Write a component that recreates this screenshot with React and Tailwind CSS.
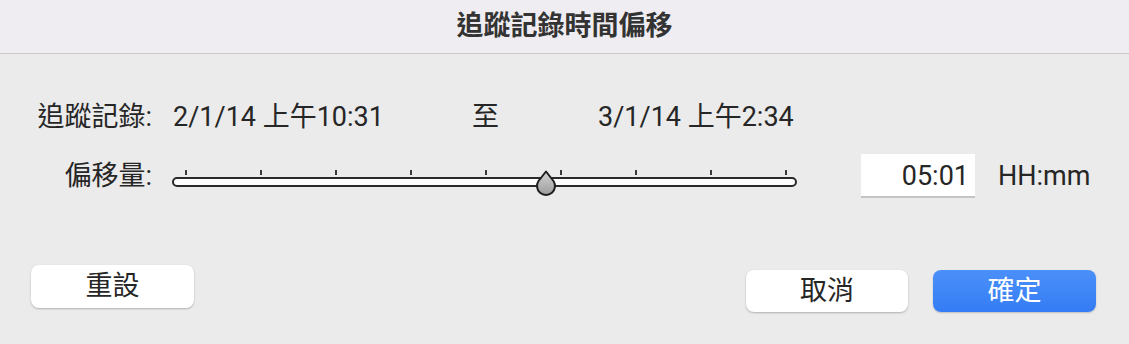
import React from 'react';

const font = { fontFamily: '"Roboto", "Noto Sans CJK TC", sans-serif' };

const ticks = [0, 1, 2, 3, 4, 5, 6, 7, 8];

function OffsetSlider() {
  return (
    <div className="relative w-[625px] h-[44px]">
      {/* tick marks */}
      <div className="absolute top-[16px] left-[13px] flex gap-[73px]">
        {ticks.map((t) => (
          <div key={t} className="w-[2px] h-[5px] bg-[#3a3a3a]" />
        ))}
      </div>
      {/* track */}
      <div className="absolute top-[23px] left-0 w-full h-[10px] rounded-full border-2 border-[#2a2a2a] bg-white" />
      {/* thumb */}
      <svg className="absolute top-[16px] left-[362px]" width="24" height="26" viewBox="0 0 24 26">
        <defs>
          <linearGradient id="thumbFill" x1="0" y1="0" x2="0" y2="1">
            <stop offset="0" stopColor="#d2d2d2" />
            <stop offset="1" stopColor="#9c9c9c" />
          </linearGradient>
        </defs>
        <path
          d="M12 1.5 L19.5 11 A9 9 0 1 1 4.5 11 Z"
          fill="url(#thumbFill)"
          stroke="#1e1e1e"
          strokeWidth="2"
          strokeLinejoin="round"
        />
      </svg>
    </div>
  );
}

export default function App() {
  return (
    <div className="w-[1129px] h-[344px] bg-[#ebebeb] text-[#262626] overflow-hidden" style={font}>
      <div className="h-[54px] bg-[#efedf2] border-b border-[#c9c9cb] flex items-center justify-center">
        <h1 className="text-[27px] font-bold text-[#333] leading-none">追蹤記錄時間偏移</h1>
      </div>

      <div className="pt-[46px]">
        <div className="flex items-center h-[34px] text-[27px]">
          <div className="w-[152px] text-right whitespace-nowrap">追蹤記錄:</div>
          <div className="w-[21px]" />
          <div className="w-[299px] whitespace-nowrap">2/1/14 上午10:31</div>
          <div className="w-[126px]">至</div>
          <div className="whitespace-nowrap">3/1/14 上午2:34</div>
        </div>

        <div className="flex items-center h-[44px] mt-[20px] text-[27px]">
          <div className="w-[152px] text-right whitespace-nowrap">偏移量:</div>
          <div className="w-[20px]" />
          <OffsetSlider />
          <div className="w-[64px]" />
          <div className="w-[114px] h-[44px] bg-white border-b-2 border-[#c4c4c4] flex items-center justify-end pr-[6px] pt-[2px]">
            05:01
          </div>
          <div className="ml-[23px]">HH:mm</div>
        </div>

        <div className="flex items-start mt-[67px] px-[31px]">
          <button className="w-[163px] h-[43px] bg-white rounded-[8px] shadow-[0_1px_2px_rgba(0,0,0,0.25)] text-[27px] leading-none text-[#262626]">
            重設
          </button>
          <div className="flex-1" />
          <div className="flex gap-[25px] mt-[5px] mr-[2px]">
            <button className="w-[162px] h-[42px] bg-white rounded-[8px] shadow-[0_1px_2px_rgba(0,0,0,0.25)] text-[27px] leading-none text-[#262626]">
              取消
            </button>
            <button className="w-[163px] h-[42px] rounded-[8px] bg-gradient-to-b from-[#4b90f9] to-[#347cf5] shadow-[0_1px_2px_rgba(0,0,0,0.2)] text-[27px] leading-none text-white">
              確定
            </button>
          </div>
        </div>
      </div>
    </div>
  );
}
